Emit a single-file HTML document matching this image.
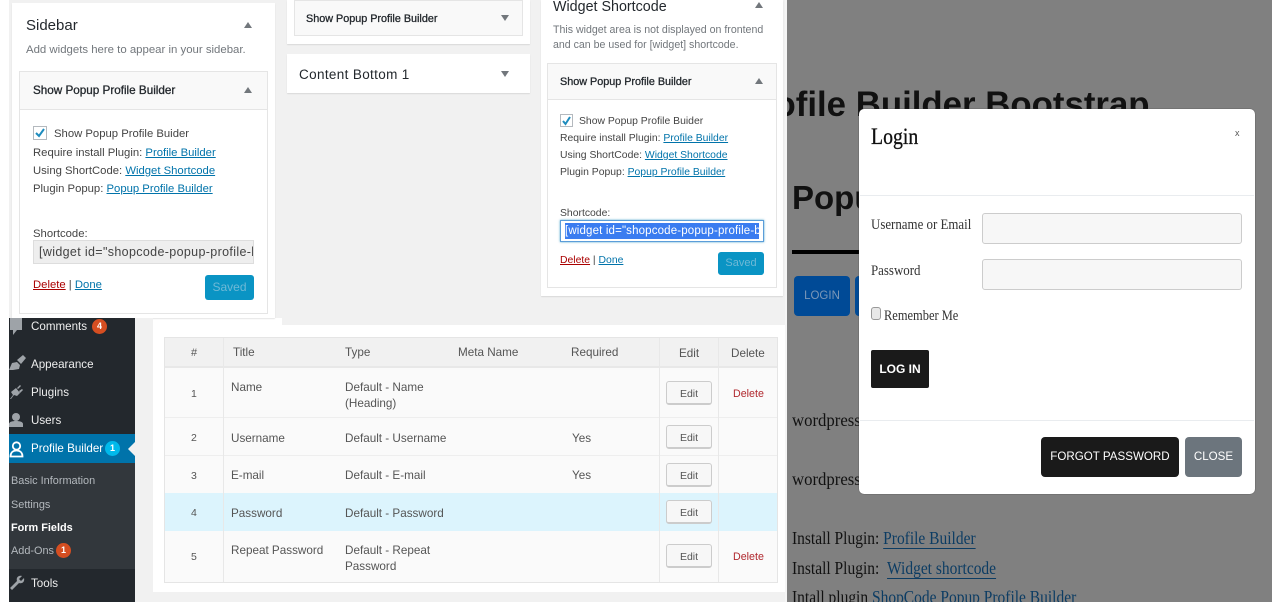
<!DOCTYPE html>
<html><head><meta charset="utf-8"><style>
html,body{margin:0;padding:0;background:#fff}
#p{position:relative;width:1272px;height:602px;overflow:hidden;background:#fff;font-family:"Liberation Sans",sans-serif;color:#444}
.b,.t{position:absolute;box-sizing:border-box}
.t{white-space:nowrap;line-height:16px;font-size:12px}
.u{text-decoration:underline;color:#0073aa}
.card{background:#fff;box-shadow:0 1px 1px rgba(0,0,0,.1)}
.w{background:#fff;border:1px solid #e5e5e5}
.h{background:#f9f9f9;border-bottom:1px solid #e5e5e5}
.s{font-size:11.7px;color:#23282d;-webkit-text-stroke:.3px #23282d}
.s2{font-size:10.8px;color:#23282d;-webkit-text-stroke:.3px #23282d}
.tri{position:absolute;width:0;height:0;border-left:4px solid transparent;border-right:4px solid transparent}
.up{border-bottom:6px solid #72777c}.dn{border-top:6px solid #72777c}
.saved{background:#0a94c4;border-radius:3px;color:#6fb9d6;text-align:center;font-size:12px}
.m{color:#eee;font-size:11.6px}
.sub{color:#b4b9be;font-size:10.9px}
.badge{position:absolute;border-radius:50%;color:#fff;font-size:9px;font-weight:bold;text-align:center;line-height:15px;width:15px;height:15px}
.g{color:#555;font-size:11.7px}
.ed{position:absolute;box-sizing:border-box;left:666px;width:46px;height:24px;background:#f7f7f7;border:1px solid #ccc;border-bottom-width:2px;border-radius:3px;color:#555;font-size:10.500px;text-align:center;line-height:24px}
.del{color:#b0282e;font-size:10.700px}
.ser{font-family:"Liberation Serif",serif;transform:scaleX(.86);transform-origin:0 50%}
.bk{color:#111;font-family:"Liberation Serif",serif;font-size:18px;line-height:20px;transform:scaleX(.86);transform-origin:0 50%}
.lk{color:#0c3c63;text-decoration:underline;text-underline-offset:4px}
.l1{font-size:11.3px}
.l2{font-size:10.4px}
</style></head><body><div id="p">

<!-- WP widgets background -->
<div class="b" style="left:9px;top:0;width:776px;height:318px;background:#f1f1f1"></div>
<div class="b" style="left:282px;top:318px;width:503px;height:7px;background:#f1f1f1"></div>

<!-- Sidebar card -->
<div class="b card" style="left:12px;top:3px;width:263px;height:315px"></div>
<div class="t" style="left:26px;top:16px;font-size:15px;line-height:20px;color:#23282d">Sidebar</div>
<div class="tri up" style="left:244px;top:22px"></div>
<div class="t" style="left:26px;top:42px;font-size:11.4px;color:#72777c">Add widgets here to appear in your sidebar.</div>
<div class="b w" style="left:19px;top:71px;width:249px;height:243px"></div>
<div class="b h" style="left:20px;top:72px;width:247px;height:38px"></div>
<div class="t s" style="left:33px;top:83px">Show Popup Profile Builder</div>
<div class="tri up" style="left:244px;top:87px"></div>
<div class="b" style="left:33px;top:126px;width:14px;height:14px;background:#fff;border:1px solid #b4b9be"></div>
<svg class="b" style="left:33px;top:126px" width="14" height="14"><path d="M3 7l3 3 5-7" fill="none" stroke="#1e8cbe" stroke-width="2"/></svg>
<div class="t l1" style="left:54px;top:126px">Show Popup Profile Buider</div>
<div class="t l1" style="left:33px;top:145px">Require install Plugin: <span class="u">Profile Builder</span></div>
<div class="t l1" style="left:33px;top:163px">Using ShortCode: <span class="u">Widget Shortcode</span></div>
<div class="t l1" style="left:33px;top:181px">Plugin Popup: <span class="u">Popup Profile Builder</span></div>
<div class="t l1" style="left:33px;top:226px">Shortcode:</div>
<div class="b" style="left:33px;top:240px;width:221px;height:24px;background:#eee;border:1px solid #ddd;overflow:hidden"><div class="t" style="left:5px;top:3px;font-size:12.5px;letter-spacing:.35px">[widget id="shopcode-popup-profile-b</div></div>
<div class="t l1" style="left:33px;top:277px"><span class="u" style="color:#a00">Delete</span> | <span class="u">Done</span></div>
<div class="b saved" style="left:205px;top:275px;width:49px;height:25px;line-height:25px">Saved</div>

<!-- Middle cards -->
<div class="b card" style="left:287px;top:0;width:243px;height:44px"></div>
<div class="b w" style="left:294px;top:0;width:229px;height:36px;background:#f9f9f9"></div>
<div class="t s2" style="left:306px;top:11px">Show Popup Profile Builder</div>
<div class="tri dn" style="left:501px;top:15px"></div>
<div class="b card" style="left:287px;top:54px;width:243px;height:39px"></div>
<div class="t" style="left:299px;top:67px;font-size:13.5px;color:#23282d;letter-spacing:.35px">Content Bottom 1</div>
<div class="tri dn" style="left:501px;top:71px"></div>

<!-- Widget Shortcode card -->
<div class="b card" style="left:541px;top:0;width:242px;height:296px"></div>
<div class="t" style="left:553px;top:-2px;font-size:14.3px;line-height:18px;color:#23282d">Widget Shortcode</div>
<div class="tri up" style="left:755px;top:2px"></div>
<div class="t" style="left:553px;top:22px;font-size:10.6px;color:#72777c">This widget area is not displayed on frontend</div>
<div class="t" style="left:553px;top:37px;font-size:10.6px;color:#72777c">and can be used for [widget] shortcode.</div>
<div class="b w" style="left:547px;top:63px;width:230px;height:225px"></div>
<div class="b h" style="left:548px;top:64px;width:228px;height:36px"></div>
<div class="t s2" style="left:560px;top:74px">Show Popup Profile Builder</div>
<div class="tri up" style="left:755px;top:78px"></div>
<div class="b" style="left:560px;top:114px;width:13px;height:13px;background:#fff;border:1px solid #b4b9be"></div>
<svg class="b" style="left:560px;top:114px" width="13" height="13"><path d="M3 7l2.500 3 4.500-7" fill="none" stroke="#1e8cbe" stroke-width="2"/></svg>
<div class="t l2" style="left:579px;top:114px">Show Popup Profile Buider</div>
<div class="t l2" style="left:560px;top:131px">Require install Plugin: <span class="u">Profile Builder</span></div>
<div class="t l2" style="left:560px;top:148px">Using ShortCode: <span class="u">Widget Shortcode</span></div>
<div class="t l2" style="left:560px;top:165px">Plugin Popup: <span class="u">Popup Profile Builder</span></div>
<div class="t l2" style="left:560px;top:206px">Shortcode:</div>
<div class="b" style="left:560px;top:220px;width:204px;height:22px;background:#fff;border:1px solid #5b9dd9;box-shadow:0 0 2px rgba(30,140,190,.8);overflow:hidden"><div class="t" style="left:4px;top:2px;width:194px;height:16px;overflow:hidden;background:#3a7cf0;color:#fff;font-size:11.500px;letter-spacing:.15px">[widget id="shopcode-popup-profile-b</div></div>
<div class="t l2" style="left:560px;top:253px"><span class="u" style="color:#a00">Delete</span> | <span class="u">Done</span></div>
<div class="b saved" style="left:718px;top:252px;width:46px;height:23px;line-height:23px;font-size:11px">Saved</div>

<!-- Admin menu -->
<div class="b" style="left:135px;top:318px;width:18px;height:284px;background:#f1f1f1"></div>
<div class="b" style="left:153px;top:592px;width:632px;height:10px;background:#f1f1f1"></div>
<div class="b" style="left:9px;top:318px;width:126px;height:284px;background:#23282d"></div>
<svg class="b" style="left:9px;top:318px" width="16" height="18"><path d="M1 0h12v12H8l-4 5v-5H1z" fill="#9ea3a8"/></svg>
<div class="t m" style="left:31px;top:319px">Comments</div>
<div class="badge" style="left:92px;top:319px;background:#d54e21">4</div>
<svg class="b" style="left:9px;top:355px" width="17" height="17"><path d="M0 15l3-7 5-1 3 3-1 4-6 1zM8 5l6-5 3 3-5 6z" fill="#9ea3a8"/></svg>
<div class="t m" style="left:31px;top:357px">Appearance</div>
<svg class="b" style="left:9px;top:384px" width="15" height="16"><path d="M1 15l3-4-2-3 5-4 4 5-3 3-3-1-3 4zM8 4l3-3 1 1-3 3zM10 7l3-2 1 1-3 3z" fill="#9ea3a8"/></svg>
<div class="t m" style="left:31px;top:385px">Plugins</div>
<svg class="b" style="left:9px;top:412px" width="15" height="16"><circle cx="7" cy="5" r="4" fill="#9ea3a8"/><path d="M0 15v-3c0-2 3-3 7-3s7 1 7 3v3z" fill="#9ea3a8"/></svg>
<div class="t m" style="left:31px;top:413px">Users</div>
<div class="b" style="left:9px;top:434px;width:126px;height:29px;background:#0073aa"></div>
<svg class="b" style="left:9px;top:440px" width="16" height="18"><circle cx="7.500" cy="6" r="3.700" fill="none" stroke="#fff" stroke-width="1.800"/><path d="M1.500 16.500c0-3.500 2-6 6-6s6 2.500 6 6z" fill="none" stroke="#fff" stroke-width="1.800"/></svg>
<div class="t m" style="left:31px;top:441px;color:#fff">Profile Builder</div>
<div class="badge" style="left:105px;top:441px;background:#00b9eb">1</div>
<div class="b" style="left:128px;top:442px;width:0;height:0;border:7px solid transparent;border-right-color:#f1f1f1;border-left-width:0"></div>
<div class="b" style="left:9px;top:463px;width:126px;height:106px;background:#32373c"></div>
<div class="t sub" style="left:11px;top:473px">Basic Information</div>
<div class="t sub" style="left:11px;top:497px">Settings</div>
<div class="t sub" style="left:11px;top:520px;color:#fff;font-weight:bold">Form Fields</div>
<div class="t sub" style="left:11px;top:543px">Add-Ons</div>
<div class="badge" style="left:56px;top:543px;background:#d54e21">1</div>
<svg class="b" style="left:9px;top:575px" width="16" height="16"><path d="M1 13l7-7c-1-3 1-6 5-5l-3 3 2 2 3-3c1 4-2 6-5 5l-7 7z" fill="#9ea3a8"/></svg>
<div class="t m" style="left:31px;top:576px">Tools</div>

<!-- Table -->
<div class="b" style="left:164px;top:337px;width:614px;height:246px;background:#fafafa;border:1px solid #e5e5e5"></div>
<div class="b" style="left:165px;top:338px;width:612px;height:30px;background:#f1f1f1;border-bottom:2px solid #e8e8e8"></div>
<div class="b" style="left:165px;top:417px;width:612px;height:1px;background:#eee"></div>
<div class="b" style="left:165px;top:455px;width:612px;height:1px;background:#eee"></div>
<div class="b" style="left:165px;top:493px;width:612px;height:38px;background:#dcf4fd"></div>
<div class="b" style="left:223px;top:338px;width:1px;height:244px;background:#e8e8e8"></div>
<div class="b" style="left:659px;top:338px;width:1px;height:244px;background:#e8e8e8"></div>
<div class="b" style="left:718px;top:338px;width:1px;height:244px;background:#e8e8e8"></div>

<div class="t g" style="left:191px;top:345px;font-size:11px">#</div>
<div class="t g" style="left:233px;top:345px">Title</div>
<div class="t g" style="left:345px;top:345px">Type</div>
<div class="t g" style="left:458px;top:345px">Meta Name</div>
<div class="t g" style="left:571px;top:345px">Required</div>
<div class="t g" style="left:679px;top:346px">Edit</div>
<div class="t g" style="left:731px;top:346px">Delete</div>

<div class="t g" style="left:191px;top:386px;font-size:10.500px">1</div>
<div class="t g" style="left:231px;top:380px">Name</div>
<div class="t g" style="left:345px;top:380px">Default - Name</div>
<div class="t g" style="left:345px;top:396px">(Heading)</div>
<div class="ed" style="top:381px">Edit</div>
<div class="t del" style="left:733px;top:386px">Delete</div>

<div class="t g" style="left:191px;top:430px;font-size:10.500px">2</div>
<div class="t g" style="left:231px;top:431px">Username</div>
<div class="t g" style="left:345px;top:431px">Default - Username</div>
<div class="t g" style="left:572px;top:431px">Yes</div>
<div class="ed" style="top:425px">Edit</div>

<div class="t g" style="left:191px;top:468px;font-size:10.500px">3</div>
<div class="t g" style="left:231px;top:468px">E-mail</div>
<div class="t g" style="left:345px;top:468px">Default - E-mail</div>
<div class="t g" style="left:572px;top:468px">Yes</div>
<div class="ed" style="top:463px">Edit</div>

<div class="t g" style="left:191px;top:505px;font-size:10.500px">4</div>
<div class="t g" style="left:231px;top:506px">Password</div>
<div class="t g" style="left:345px;top:506px">Default - Password</div>
<div class="ed" style="top:500px">Edit</div>

<div class="t g" style="left:191px;top:549px;font-size:10.500px">5</div>
<div class="t g" style="left:231px;top:543px">Repeat Password</div>
<div class="t g" style="left:345px;top:543px">Default - Repeat</div>
<div class="t g" style="left:345px;top:559px">Password</div>
<div class="ed" style="top:544px">Edit</div>
<div class="t del" style="left:733px;top:549px">Delete</div>

<!-- Right page with overlay -->
<div class="b" style="left:787px;top:0;width:485px;height:602px;background:#808080;overflow:hidden">
  <div class="t" style="left:-12.500px;top:84px;font-size:34.800px;line-height:42px;font-weight:bold;color:#111">ofile Builder Bootstrap</div>
  <div class="t" style="left:5px;top:178px;font-size:33px;line-height:40px;font-weight:bold;color:#111">Popup</div>
  <div class="b" style="left:5px;top:250px;width:70px;height:4px;background:#000"></div>
  <div class="b" style="left:7px;top:276px;width:56px;height:40px;background:#004a96;border-radius:4px;color:#7b97b8;text-align:center;line-height:40px;font-size:11.500px">LOGIN</div>
  <div class="b" style="left:68px;top:276px;width:20px;height:40px;background:#004a96;border-radius:4px"></div>
  <div class="t bk" style="left:5px;top:410px;transform:scaleX(.93)">wordpress</div>
  <div class="t bk" style="left:5px;top:469px;transform:scaleX(.93)">wordpress</div>
  <div class="t bk" style="left:5px;top:528px">Install Plugin: <span class="lk">Profile Builder</span></div>
  <div class="t bk" style="left:5px;top:558px">Install Plugin: &nbsp;<span class="lk">Widget shortcode</span></div>
  <div class="t bk" style="left:5px;top:587px">Intall plugin <span class="lk" style="text-decoration:none">ShopCode Popup Profile Builder</span></div>
</div>
<div class="b" style="left:785px;top:0;width:2px;height:602px;background:#f5f5f5"></div>

<!-- Modal -->
<div class="b" style="left:859px;top:109px;width:396px;height:385px;background:#fff;border-radius:5px;box-shadow:0 0 1px #333"></div>
<div class="t ser" style="left:871px;top:124px;font-size:23px;line-height:26px;color:#111;-webkit-text-stroke:.3px #111">Login</div>
<div class="t" style="left:1235px;top:125px;font-size:9px;color:#555">x</div>
<div class="b" style="left:860px;top:195px;width:394px;height:1px;background:#e9ecef"></div>
<div class="t ser" style="left:871px;top:217px;font-size:15px;color:#333">Username or Email</div>
<div class="b" style="left:982px;top:213px;width:260px;height:31px;background:#f7f7f7;border:1px solid #ccc;border-radius:3px"></div>
<div class="t ser" style="left:871px;top:263px;font-size:15px;color:#333">Password</div>
<div class="b" style="left:982px;top:259px;width:260px;height:31px;background:#f7f7f7;border:1px solid #ccc;border-radius:3px"></div>
<div class="b" style="left:871px;top:307px;width:10px;height:13px;background:#e8e8e8;border:1px solid #999;border-radius:3px"></div>
<div class="t ser" style="left:884px;top:308px;font-size:15px;color:#333;transform:scaleX(.83)">Remember Me</div>
<div class="b" style="left:871px;top:350px;width:58px;height:38px;background:#1a1a1a;border-radius:2px;color:#fff;font-weight:bold;font-size:12px;text-align:center;line-height:38px;white-space:nowrap">LOG IN</div>
<div class="b" style="left:860px;top:420px;width:394px;height:1px;background:#e9ecef"></div>
<div class="b" style="left:1041px;top:437px;width:138px;height:40px;background:#1a1a1a;border-radius:4px;color:#fff;font-size:11.600px;text-align:center;line-height:40px;white-space:nowrap">FORGOT PASSWORD</div>
<div class="b" style="left:1185px;top:437px;width:57px;height:40px;background:#6c757d;border-radius:4px;color:#fff;font-size:11.600px;text-align:center;line-height:40px">CLOSE</div>

</div></body></html>
